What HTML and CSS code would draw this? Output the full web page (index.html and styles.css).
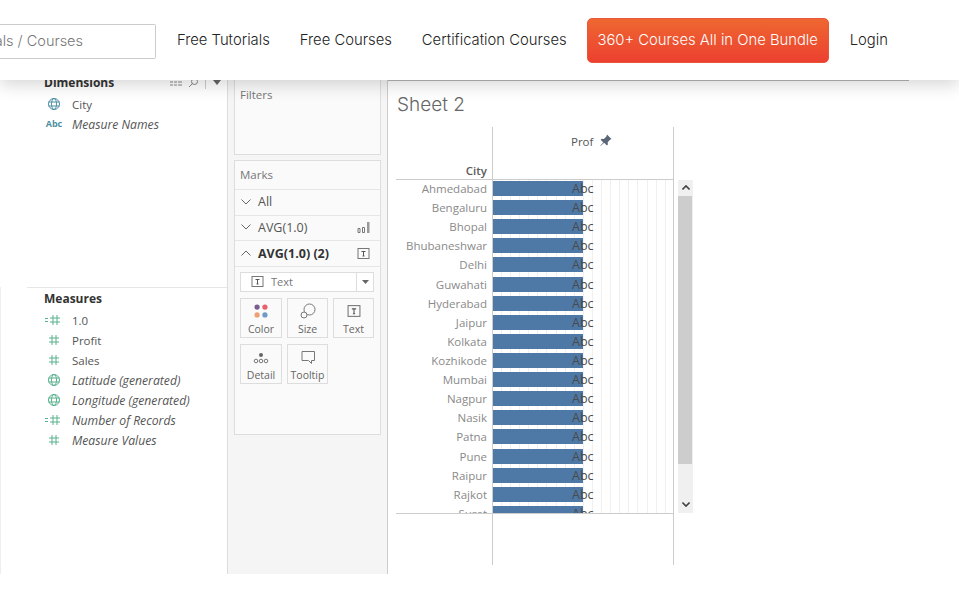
FILE: index.html
```html
<!DOCTYPE html>
<html lang="en">
<head>
    <meta charset="UTF-8">
    <meta name="viewport" content="width=device-width, initial-scale=1.0">
    <title>Sheet 2</title>
    <link rel="stylesheet" href="styles.css">
</head>
<body>
    <svg class="defs" width="0" height="0">
        <symbol id="globe" viewBox="0 0 14 14">
            <circle cx="7" cy="7" r="5.5" fill="none" stroke="currentColor"/>
            <ellipse cx="7" cy="7" rx="2.5" ry="5.5" fill="none" stroke="currentColor"/>
            <path d="M1.5 5h11M1.5 9h11" stroke="currentColor" fill="none"/>
        </symbol>
        <symbol id="hash" viewBox="0 0 14 14">
            <path d="M5 2v10M9 2v10M2 5h10M2 9h10" stroke="currentColor" fill="none"/>
        </symbol>
        <symbol id="hash-calc" viewBox="0 0 20 14">
            <path d="M11 2v10M15 2v10M8 5h10M8 9h10" stroke="currentColor" fill="none"/>
            <path d="M3 5.500h3M3 8.500h3" stroke="currentColor" fill="none"/>
        </symbol>
        <symbol id="text-box" viewBox="0 0 13 13">
            <rect x="1" y="1.500" width="11" height="10" fill="none" stroke="#777"/>
            <path d="M4.500 4.500h4M6.500 4.500v4.500M5.500 9h2" stroke="#555" fill="none"/>
        </symbol>
        <symbol id="chev-down" viewBox="0 0 10 6">
            <path d="M.5 .5l4.500 4.500 4.500-4.500" stroke="currentColor" fill="none"/>
        </symbol>
        <symbol id="chev-up" viewBox="0 0 10 6">
            <path d="M.5 5.500l4.500-4.500 4.500 4.500" stroke="currentColor" fill="none"/>
        </symbol>
    </svg>

    <header class="topbar">
        <div class="search">als / Courses</div>
        <nav class="nav">
            <a href="##" class="nav-link">Free Tutorials</a>
            <a href="##" class="nav-link">Free Courses</a>
            <a href="##" class="nav-link">Certification Courses</a>
            <a href="##" class="bundle">360+ Courses All in One Bundle</a>
            <a href="##" class="nav-link login">Login</a>
        </nav>
    </header>

    <div class="workspace">
        <!-- data pane -->
        <aside class="data-pane">
            <section class="dimensions">
                <div class="pane-title">
                    <span>Dimensions</span>
                    <span class="pane-tools">
                        <svg width="12" height="8" viewBox="0 0 12 8"><path d="M0 1h3M4 1h3M8 1h4M0 4h3M4 4h3M8 4h4M0 7h3M4 7h3M8 7h4" stroke="#888" fill="none"/></svg>
                        <svg width="11" height="11" viewBox="0 0 11 11"><circle cx="6.500" cy="4.500" r="3" fill="none" stroke="#888"/><path d="M4.500 6.500L1 10" stroke="#888" fill="none"/></svg>
                        <span class="tool-sep"></span>
                        <svg width="8" height="5" viewBox="0 0 8 5"><path d="M0 0h8L4 5z" fill="#666"/></svg>
                    </span>
                </div>
                <div class="field dim"><svg class="field-icon"><use href="#globe"/></svg>City</div>
                <div class="field dim gen"><span class="field-icon abc-icon">Abc</span>Measure Names</div>
            </section>
            <div class="lower-pane">
                <section class="measures">
                    <div class="pane-title">Measures</div>
                    <div class="field mea"><svg class="field-icon calc"><use href="#hash-calc"/></svg>1.0</div>
                    <div class="field mea"><svg class="field-icon"><use href="#hash"/></svg>Profit</div>
                    <div class="field mea"><svg class="field-icon"><use href="#hash"/></svg>Sales</div>
                    <div class="field mea gen"><svg class="field-icon"><use href="#globe"/></svg>Latitude (generated)</div>
                    <div class="field mea gen"><svg class="field-icon"><use href="#globe"/></svg>Longitude (generated)</div>
                    <div class="field mea gen"><svg class="field-icon calc"><use href="#hash-calc"/></svg>Number of Records</div>
                    <div class="field mea gen"><svg class="field-icon"><use href="#hash"/></svg>Measure Values</div>
                </section>
            </div>
        </aside>

        <!-- filters and marks -->
        <div class="shelves">
            <div class="card filters">Filters</div>
            <div class="card marks">
                <div class="marks-title">Marks</div>
                <div class="marks-row"><svg class="chev"><use href="#chev-down"/></svg>All</div>
                <div class="marks-row"><svg class="chev"><use href="#chev-down"/></svg>AVG(1.0)
                    <svg class="row-icon" width="13" height="13" viewBox="0 0 13 13"><path d="M1 7.500h2v4H1zM5.500 6.500h2v5h-2z" fill="none" stroke="#777"/><path d="M10 1h2.500v11H10z" fill="#999"/></svg>
                </div>
                <div class="marks-row open"><svg class="chev"><use href="#chev-up"/></svg>AVG(1.0) (2)
                    <svg class="row-icon" width="13" height="13"><use href="#text-box"/></svg>
                </div>
                <div class="marks-body">
                    <div class="mark-type">
                        <svg width="13" height="13"><use href="#text-box"/></svg>
                        <span class="mark-type-name">Text</span>
                        <span class="mark-type-drop"><svg width="7" height="4" viewBox="0 0 7 4"><path d="M0 0h7L3.500 4z" fill="#666"/></svg></span>
                    </div>
                    <div class="mark-btns">
                        <div class="mark-btn">
                            <svg width="14" height="14" viewBox="0 0 16 16"><circle cx="3.500" cy="3.500" r="3" fill="#7b5c8e"/><circle cx="12.500" cy="3.500" r="3" fill="#e8606a"/><circle cx="3.500" cy="12.500" r="3" fill="#f0a070"/><circle cx="12.500" cy="12.500" r="3" fill="#6f9bc8"/></svg>
                            Color
                        </div>
                        <div class="mark-btn">
                            <svg width="16" height="16" viewBox="0 0 16 16"><circle cx="9.500" cy="6.500" r="5.500" fill="none" stroke="#777"/><circle cx="4" cy="12" r="3" fill="#fafafa" stroke="#777"/></svg>
                            Size
                        </div>
                        <div class="mark-btn">
                            <svg width="14" height="14" viewBox="0 0 13 13"><use href="#text-box"/></svg>
                            Text
                        </div>
                        <div class="mark-btn">
                            <svg width="16" height="16" viewBox="0 0 16 16"><circle cx="8" cy="6" r="2" fill="#666"/><circle cx="3" cy="12" r="1.800" fill="none" stroke="#777"/><circle cx="8" cy="12" r="1.800" fill="none" stroke="#777"/><circle cx="13" cy="12" r="1.800" fill="none" stroke="#777"/></svg>
                            Detail
                        </div>
                        <div class="mark-btn">
                            <svg width="16" height="16" viewBox="0 0 16 16"><path d="M2 2.500h12.500v9h-3v3l-3-3H2z" fill="none" stroke="#777"/></svg>
                            Tooltip
                        </div>
                    </div>
                </div>
            </div>
        </div>

        <!-- worksheet -->
        <main class="view">
            <div class="sheet-top">
                <h1 class="sheet-title">Sheet 2</h1>
            </div>
            <div class="chart">
                <div class="head-city">City</div>
                <div class="head-prof">Prof
                    <svg width="13" height="13" viewBox="0 0 13 13"><path d="M8 .5l4.500 4.500-1.500.7-2.300 2.600.2 2.200-1 1-2.700-2.700L1.500 12l-.3-.3 3.100-3.300L1.700 5.700l1-1 2.200.2 2.500-2.400z" fill="#5a6675"/></svg>
                </div>
                <div class="rows">
                    <div class="row"><div class="row-name">Ahmedabad</div><div class="plot"><div class="bar"></div><span class="abc">Abc</span></div></div>
                    <div class="row"><div class="row-name">Bengaluru</div><div class="plot"><div class="bar"></div><span class="abc">Abc</span></div></div>
                    <div class="row"><div class="row-name">Bhopal</div><div class="plot"><div class="bar"></div><span class="abc">Abc</span></div></div>
                    <div class="row"><div class="row-name">Bhubaneshwar</div><div class="plot"><div class="bar"></div><span class="abc">Abc</span></div></div>
                    <div class="row"><div class="row-name">Delhi</div><div class="plot"><div class="bar"></div><span class="abc">Abc</span></div></div>
                    <div class="row"><div class="row-name">Guwahati</div><div class="plot"><div class="bar"></div><span class="abc">Abc</span></div></div>
                    <div class="row"><div class="row-name">Hyderabad</div><div class="plot"><div class="bar"></div><span class="abc">Abc</span></div></div>
                    <div class="row"><div class="row-name">Jaipur</div><div class="plot"><div class="bar"></div><span class="abc">Abc</span></div></div>
                    <div class="row"><div class="row-name">Kolkata</div><div class="plot"><div class="bar"></div><span class="abc">Abc</span></div></div>
                    <div class="row"><div class="row-name">Kozhikode</div><div class="plot"><div class="bar"></div><span class="abc">Abc</span></div></div>
                    <div class="row"><div class="row-name">Mumbai</div><div class="plot"><div class="bar"></div><span class="abc">Abc</span></div></div>
                    <div class="row"><div class="row-name">Nagpur</div><div class="plot"><div class="bar"></div><span class="abc">Abc</span></div></div>
                    <div class="row"><div class="row-name">Nasik</div><div class="plot"><div class="bar"></div><span class="abc">Abc</span></div></div>
                    <div class="row"><div class="row-name">Patna</div><div class="plot"><div class="bar"></div><span class="abc">Abc</span></div></div>
                    <div class="row"><div class="row-name">Pune</div><div class="plot"><div class="bar"></div><span class="abc">Abc</span></div></div>
                    <div class="row"><div class="row-name">Raipur</div><div class="plot"><div class="bar"></div><span class="abc">Abc</span></div></div>
                    <div class="row"><div class="row-name">Rajkot</div><div class="plot"><div class="bar"></div><span class="abc">Abc</span></div></div>
                    <div class="row"><div class="row-name">Surat</div><div class="plot"><div class="bar"></div><span class="abc">Abc</span></div></div>
                </div>
                <div class="scrollbar">
                    <span class="scroll-btn"><svg width="8" height="5"><use href="#chev-up"/></svg></span>
                    <span class="scroll-thumb"></span>
                    <span class="scroll-btn"><svg width="8" height="5"><use href="#chev-down"/></svg></span>
                </div>
                <div class="foot-empty"></div>
                <div class="foot-plot"></div>
            </div>
        </main>
    </div>
</body>
</html>
```
FILE: styles.css
```css
*{
    padding: 0;
    margin: 0;
    box-sizing: border-box;
}

html,body{
    height: 100%;
    overflow: hidden;
}

body{
    background-color: #fff;
    font-family: "Open Sans", "Liberation Sans", sans-serif;
    color: #555;
}

a{
    text-decoration: none;
    color: #222;
}

.defs{
    display: block;
    height: 0;
}

/* ==================top bar===================== */
.topbar{
    position: relative;
    z-index: 2;
    display: flex;
    align-items: center;
    height: 80px;
    background-color: #fff;
    box-shadow: 0 5px 16px rgba(0, 0, 0, 0.16);
}

.search{
    display: flex;
    align-items: center;
    justify-content: flex-end;
    flex: none;
    width: 156px;
    height: 35px;
    margin-top: 2px;
    padding: 0 72px 2px 0;
    border: 1px solid #ccc;
    border-left: none;
    border-radius: 0 2px 2px 0;
    font-family: Inter, "Liberation Sans", sans-serif;
    font-size: 14.500px;
    font-weight: 300;
    color: #777;
    white-space: nowrap;
    overflow: hidden;
}

.nav{
    display: flex;
    align-items: center;
    margin-left: 21px;
    font-family: Inter, "Liberation Sans", sans-serif;
    font-size: 14.800px;
    font-weight: 300;
}

.nav-link{
    margin-right: 30px;
    white-space: nowrap;
}

.bundle{
    display: block;
    flex: none;
    width: 242px;
    height: 45px;
    margin-left: -10px;
    border: 1px solid #e9553a;
    border-radius: 5px;
    background: linear-gradient(#ee6730, #ec4030);
    color: #fff;
    line-height: 43px;
    text-align: center;
    white-space: nowrap;
}

.login{
    margin-left: 21px;
    margin-right: 0;
}

/* ==================workspace===================== */
.workspace{
    display: flex;
    height: 504px;
    margin-top: -10px;
    overflow: hidden;
}

.data-pane{
    display: flex;
    flex-direction: column;
    flex: none;
    width: 228px;
    border-right: 1px solid #ddd;
    font-size: 11.500px;
    color: #555;
}

.dimensions{
    flex: none;
    height: 217px;
}

.lower-pane{
    flex: 1;
    border-left: 1px solid #eee;
}

.measures{
    margin-left: 26px;
    border-top: 1px solid #e6e6e6;
}

.pane-title{
    display: flex;
    align-items: center;
    justify-content: space-between;
    height: 24px;
    margin-left: 44px;
    font-size: 12px;
    font-weight: 700;
    color: #333;
}

.measures .pane-title{
    height: 21px;
    margin: 0 0 1px 17px;
}

.pane-tools{
    display: flex;
    align-items: center;
    gap: 6px;
    padding-right: 6px;
}

.tool-sep{
    width: 1px;
    height: 14px;
    margin-right: 1px;
    background-color: #ccc;
}

.field{
    display: flex;
    align-items: center;
    height: 20px;
    padding-left: 44px;
    white-space: nowrap;
}

.measures .field{
    padding-left: 17px;
}

.gen{
    font-size: 12.200px;
    font-style: italic;
}

.field-icon{
    flex: none;
    width: 20px;
    height: 14px;
    margin-right: 8px;
}

.dim .field-icon{
    color: #4f8fa3;
}

.mea .field-icon{
    color: #58b08c;
}

.field-icon.calc{
    margin-left: -2px;
    margin-right: 10px;
}

.abc-icon{
    font-size: 9px;
    font-style: normal;
    font-weight: 700;
    line-height: 14px;
    text-align: center;
}

/* ==================shelves===================== */
.shelves{
    flex: none;
    width: 160px;
    padding: 0 6px;
    border-right: 1px solid #ccc;
    background-color: #f5f5f5;
}

.card{
    width: 147px;
    border: 1px solid #ddd;
    background-color: #fafafa;
    font-size: 11.500px;
    color: #777;
}

.filters{
    height: 85px;
    padding: 16px 5px 0;
    margin-bottom: 5px;
}

.marks{
    height: 275px;
}

.marks-title{
    height: 29px;
    padding: 6px 5px 0;
    border-bottom: 1px solid #e6e6e6;
}

.marks-row{
    display: flex;
    align-items: center;
    height: 25.670px;
    padding: 0 10px 1px 6px;
    border-bottom: 1px solid #e6e6e6;
    font-size: 12.500px;
    color: #555;
}

.marks-row.open{
    font-weight: 700;
    color: #333;
}

.chev{
    flex: none;
    width: 10px;
    height: 6px;
    margin-right: 7px;
    color: #666;
}

.row-icon{
    margin-left: auto;
}

.marks-body{
    padding: 5px 6px 0 5px;
}

.mark-type{
    display: flex;
    align-items: center;
    height: 20px;
    padding-left: 10px;
    border: 1px solid #ddd;
    background-color: #fff;
    font-size: 11px;
    color: #777;
}

.mark-type-name{
    margin-left: 7px;
}

.mark-type-drop{
    display: flex;
    align-items: center;
    justify-content: center;
    width: 17px;
    height: 100%;
    margin-left: auto;
    border-left: 1px solid #ddd;
}

.mark-btns{
    display: grid;
    grid-template-columns: 42px 41px 41px;
    grid-auto-rows: 40px;
    gap: 6px 5px;
    margin-top: 6px;
}

.mark-btn{
    display: flex;
    flex-direction: column;
    align-items: center;
    gap: 3px;
    height: 40px;
    padding-top: 4px;
    border: 1px solid #ddd;
    font-size: 10.500px;
    line-height: 15px;
    color: #666;
}

.mark-btn svg{
    flex: none;
    height: 16px;
}

/* ==================view===================== */
.view{
    flex: 1;
    min-width: 0;
}

.sheet-top{
    height: 47px;
    margin: 10px 50px 0 0;
    padding: 12px 0 0 9px;
    border-top: 1px solid #b5b5b5;
}

.sheet-title{
    font-family: Inter, "Liberation Sans", sans-serif;
    font-size: 19px;
    font-weight: 300;
    line-height: 24px;
    color: #666;
}

.chart{
    display: grid;
    grid-template-columns: 96px 182px 4px 15px;
    grid-template-rows: 53px 333px 52px;
    margin-left: 8px;
    font-size: 11.500px;
}

.head-city{
    padding: 36px 5px 0 0;
    border-bottom: 1px solid #ccc;
    font-weight: 600;
    text-align: right;
    color: #5a5a5a;
}

.head-prof{
    display: flex;
    align-items: flex-start;
    gap: 6px;
    padding: 7px 0 0 78px;
    border: 1px solid #ccc;
    border-width: 0 1px 1px;
    color: #555;
}

.rows{
    grid-column: 1 / 3;
    overflow: hidden;
}

.row{
    display: flex;
    height: 19.120px;
}

.row-name{
    flex: none;
    width: 96px;
    padding-right: 5px;
    line-height: 18px;
    text-align: right;
    color: #8a8a8a;
}

.plot{
    display: flex;
    flex: none;
    width: 182px;
    border: 1px solid #ccc;
    border-width: 0 1px;
    background: repeating-linear-gradient(to right, transparent 0, transparent 7.900px, #f0f0f0 7.900px, #f0f0f0 8.900px, transparent 8.900px, transparent 9.100px);
}

.bar{
    flex: none;
    width: 90px;
    height: 15px;
    margin-top: 1px;
    background-color: #4e79a7;
}

.abc{
    margin-left: -11px;
    font-size: 12.500px;
    line-height: 18px;
    color: #4a4a4a;
}

.scrollbar{
    grid-column: 4;
    grid-row: 2;
    display: flex;
    flex-direction: column;
    background-color: #f0f0f0;
}

.scroll-btn{
    display: flex;
    align-items: center;
    justify-content: center;
    flex: none;
    height: 16px;
    padding-bottom: 1px;
    color: #444;
    stroke-width: 2px;
}

.scroll-thumb{
    flex: none;
    width: 14px;
    height: 268px;
    background-color: #cdcdcd;
}

.scroll-thumb + .scroll-btn{
    margin-top: auto;
}

.foot-empty{
    grid-column: 1;
    grid-row: 3;
    border-top: 1px solid #ccc;
}

.foot-plot{
    grid-column: 2;
    grid-row: 3;
    border: 1px solid #ccc;
    border-bottom: none;
}
```
